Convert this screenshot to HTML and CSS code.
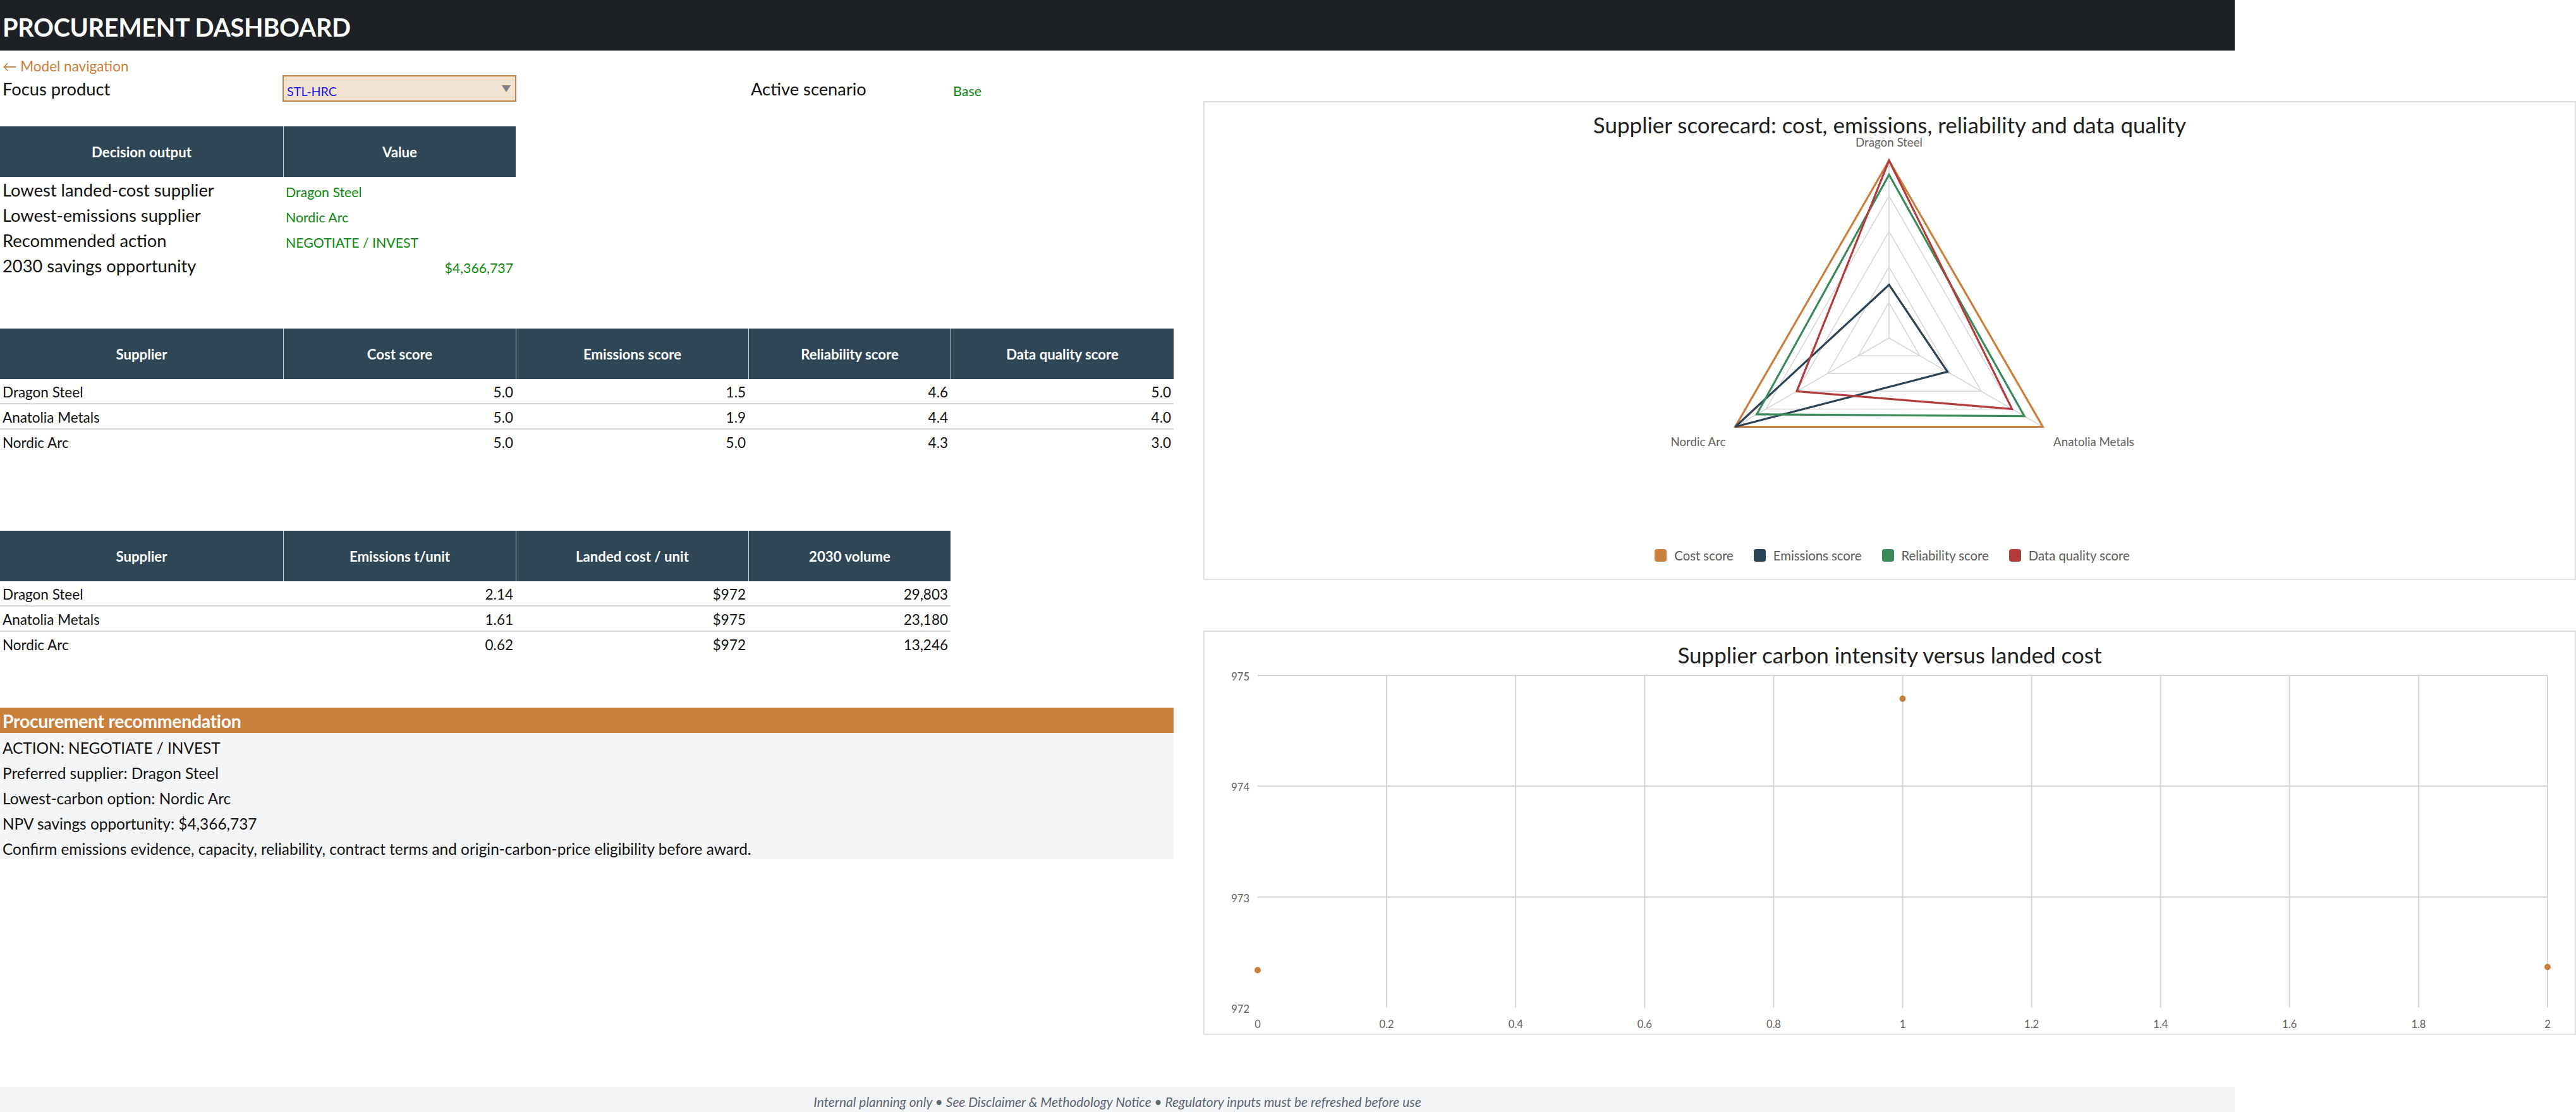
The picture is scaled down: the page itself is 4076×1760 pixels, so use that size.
FILE: index.html
```html
<!DOCTYPE html>
<html lang="en">
<head>
<meta charset="utf-8">
<title>Procurement Dashboard</title>
<link rel="stylesheet" href="styles.css">
</head>
<body>
<header class="topbar"><h1 class="page-title">PROCUREMENT DASHBOARD</h1></header>
<div class="main">
  <section class="left">
    <div class="nav">← Model navigation</div>
    <div class="focus-row">
      <div class="lbl">Focus product</div>
      <div class="dropdown"><span class="dd-text">STL-HRC</span><span class="dd-arrow"></span></div>
      <div class="spacer"></div>
      <div class="lbl">Active scenario</div>
      <div class="scenario-val">Base</div>
    </div>

    <div class="tbl decision">
      <div class="th">Decision output</div><div class="th sep">Value</div>
      <div class="dl">Lowest landed-cost supplier</div><div class="dv">Dragon Steel</div>
      <div class="dl">Lowest-emissions supplier</div><div class="dv">Nordic Arc</div>
      <div class="dl">Recommended action</div><div class="dv">NEGOTIATE / INVEST</div>
      <div class="dl">2030 savings opportunity</div><div class="dv num">$4,366,737</div>
    </div>

    <div class="tbl scores">
      <div class="th">Supplier</div><div class="th sep">Cost score</div><div class="th sep">Emissions score</div><div class="th sep">Reliability score</div><div class="th sep">Data quality score</div>
      <div class="td">Dragon Steel</div><div class="td num">5.0</div><div class="td num">1.5</div><div class="td num">4.6</div><div class="td num">5.0</div>
      <div class="td">Anatolia Metals</div><div class="td num">5.0</div><div class="td num">1.9</div><div class="td num">4.4</div><div class="td num">4.0</div>
      <div class="td last">Nordic Arc</div><div class="td num last">5.0</div><div class="td num last">5.0</div><div class="td num last">4.3</div><div class="td num last">3.0</div>
    </div>

    <div class="tbl emissions">
      <div class="th">Supplier</div><div class="th sep">Emissions t/unit</div><div class="th sep">Landed cost / unit</div><div class="th sep">2030 volume</div>
      <div class="td">Dragon Steel</div><div class="td num">2.14</div><div class="td num">$972</div><div class="td num">29,803</div>
      <div class="td">Anatolia Metals</div><div class="td num">1.61</div><div class="td num">$975</div><div class="td num">23,180</div>
      <div class="td last">Nordic Arc</div><div class="td num last">0.62</div><div class="td num last">$972</div><div class="td num last">13,246</div>
    </div>

    <div class="reco">
      <div class="reco-head">Procurement recommendation</div>
      <div class="reco-body">
        <div class="reco-line">ACTION: NEGOTIATE / INVEST</div>
        <div class="reco-line">Preferred supplier: Dragon Steel</div>
        <div class="reco-line">Lowest-carbon option: Nordic Arc</div>
        <div class="reco-line">NPV savings opportunity: $4,366,737</div>
        <div class="reco-line">Confirm emissions evidence, capacity, reliability, contract terms and origin-carbon-price eligibility before award.</div>
      </div>
    </div>
  </section>

  <section class="charts">
    <div class="card card-radar">
      <div class="chart-title">Supplier scorecard: cost, emissions, reliability and data quality</div>
      <svg class="radar" width="2168" height="645" viewBox="0 0 2168 645">
        <g class="grid">
          <polygon points="1083,261.8 1131.67,346.1 1034.33,346.1"/>
          <polygon points="1083,205.6 1180.34,374.2 985.66,374.2"/>
          <polygon points="1083,149.4 1229.01,402.3 936.99,402.3"/>
          <polygon points="1083,93.2 1277.68,430.4 888.32,430.4"/>
          <polygon points="1083,37 1326.35,458.5 839.65,458.5"/>
          <line x1="1083" y1="318" x2="1083" y2="37"/>
          <line x1="1083" y1="318" x2="1326.35" y2="458.5"/>
          <line x1="1083" y1="318" x2="839.65" y2="458.5"/>
        </g>
        <polygon class="s-cost" points="1083,37 1326.35,458.5 839.65,458.5"/>
        <polygon class="s-emis" points="1083,233.7 1175.47,371.39 839.65,458.5"/>
        <polygon class="s-rel" points="1083,59.48 1297.15,441.64 873.72,438.83"/>
        <polygon class="s-dq" points="1083,37 1277.68,430.4 936.99,402.3"/>
        <text class="axis-lbl" x="1083" y="15" text-anchor="middle">Dragon Steel</text>
        <text class="axis-lbl" x="781" y="489" text-anchor="middle">Nordic Arc</text>
        <text class="axis-lbl" x="1407" y="489" text-anchor="middle">Anatolia Metals</text>
      </svg>
      <div class="legend">
        <span class="lg-item"><span class="sw sw-cost"></span><span class="lg-t">Cost score</span></span>
        <span class="lg-item"><span class="sw sw-emis"></span><span class="lg-t">Emissions score</span></span>
        <span class="lg-item"><span class="sw sw-rel"></span><span class="lg-t">Reliability score</span></span>
        <span class="lg-item"><span class="sw sw-dq"></span><span class="lg-t">Data quality score</span></span>
      </div>
    </div>

    <div class="card card-scatter">
      <div class="chart-title">Supplier carbon intensity versus landed cost</div>
      <svg class="scatter" width="2168" height="580" viewBox="0 0 2168 580">
        <g class="sgrid">
          <line x1="84" y1="13" x2="2125" y2="13"/>
          <line x1="84" y1="188.33" x2="2125" y2="188.33"/>
          <line x1="84" y1="363.67" x2="2125" y2="363.67"/>
          <line x1="288.1" y1="13" x2="288.1" y2="539"/>
          <line x1="492.2" y1="13" x2="492.2" y2="539"/>
          <line x1="696.3" y1="13" x2="696.3" y2="539"/>
          <line x1="900.4" y1="13" x2="900.4" y2="539"/>
          <line x1="1104.5" y1="13" x2="1104.5" y2="539"/>
          <line x1="1308.6" y1="13" x2="1308.6" y2="539"/>
          <line x1="1512.7" y1="13" x2="1512.7" y2="539"/>
          <line x1="1716.8" y1="13" x2="1716.8" y2="539"/>
          <line x1="1920.9" y1="13" x2="1920.9" y2="539"/>
          <line x1="2125" y1="13" x2="2125" y2="539"/>
        </g>
        <g class="ylbl">
          <text x="71" y="21" text-anchor="end">975</text>
          <text x="71" y="196" text-anchor="end">974</text>
          <text x="71" y="372" text-anchor="end">973</text>
          <text x="71" y="547" text-anchor="end">972</text>
        </g>
        <g class="xlbl">
          <text x="84" y="571" text-anchor="middle">0</text>
          <text x="288.1" y="571" text-anchor="middle">0.2</text>
          <text x="492.2" y="571" text-anchor="middle">0.4</text>
          <text x="696.3" y="571" text-anchor="middle">0.6</text>
          <text x="900.4" y="571" text-anchor="middle">0.8</text>
          <text x="1104.5" y="571" text-anchor="middle">1</text>
          <text x="1308.6" y="571" text-anchor="middle">1.2</text>
          <text x="1512.7" y="571" text-anchor="middle">1.4</text>
          <text x="1716.8" y="571" text-anchor="middle">1.6</text>
          <text x="1920.9" y="571" text-anchor="middle">1.8</text>
          <text x="2125" y="571" text-anchor="middle">2</text>
        </g>
        <g class="pts">
          <circle cx="84" cy="479.4" r="5"/>
          <circle cx="1104.5" cy="49.8" r="5"/>
          <circle cx="2125" cy="474.5" r="5"/>
        </g>
      </svg>
    </div>
  </section>
</div>
<footer class="footer"><span class="footer-text">Internal planning only • See Disclaimer &amp; Methodology Notice • Regulatory inputs must be refreshed before use</span></footer>
</body>
</html>
```
FILE: styles.css
```css
html, body {
  margin: 0;
  padding: 0;
}
body {
  width: 4076px;
  min-height: 1760px;
  display: flex;
  flex-direction: column;
  font-family: Lato, "Open Sans", sans-serif;
  color: #111;
  background: #fff;
}
.topbar {
  width: 3536px;
  height: 80px;
  box-sizing: border-box;
  background: #1d2025;
  padding: 23px 0 0 4px;
}
.page-title {
  margin: 0;
  font-size: 39.6px;
  line-height: 40px;
  font-weight: 700;
  color: #fff;
  letter-spacing: -0.3px;
}
.main {
  display: flex;
  align-items: flex-start;
}
.left {
  width: 1857px;
  flex: 0 0 1857px;
}
.nav {
  margin-top: 12px;
  height: 26px;
  line-height: 26px;
  font-size: 22.5px;
  color: #c8803c;
  padding-left: 4px;
}
.focus-row {
  margin-top: 1px;
  height: 42px;
  display: grid;
  grid-template-columns: 447px 370px 367px 320px 1fr;
  align-items: end;
}
.lbl {
  font-size: 27.3px;
  padding: 0 0 4px 4px;
  line-height: 32px;
}
.dropdown {
  height: 42px;
  box-sizing: border-box;
  border: 2px solid #c8803c;
  background: #f3e3d3;
  display: flex;
  align-items: flex-end;
  justify-content: space-between;
  padding: 0 7px 2px 5px;
}
.dd-text {
  font-size: 19.8px;
  line-height: 25px;
  color: #1515f5;
}
.dd-arrow {
  align-self: center;
  width: 0;
  height: 0;
  border-left: 7.5px solid transparent;
  border-right: 7.5px solid transparent;
  border-top: 11px solid #7d8088;
  margin-top: 3px;
}
.scenario-val {
  font-size: 21.5px;
  line-height: 26px;
  color: #0a8a0a;
  padding: 0 0 4px 4px;
}

.tbl {
  display: grid;
}
.decision {
  margin-top: 39px;
  width: 816px;
  grid-template-columns: 448px 368px;
}
.scores {
  margin-top: 80px;
  width: 1857px;
  grid-template-columns: 448px 368px 368px 320px 353px;
}
.emissions {
  margin-top: 120px;
  width: 1504px;
  grid-template-columns: 448px 368px 368px 320px;
}
.th {
  background: #2f4656;
  color: #fff;
  font-weight: 700;
  font-size: 22.2px;
  display: flex;
  align-items: center;
  justify-content: center;
  height: 80px;
  box-sizing: border-box;
}
.th.sep {
  border-left: 1.5px solid #c5cdd3;
}
.dl {
  height: 40px;
  box-sizing: border-box;
  display: flex;
  align-items: flex-end;
  font-size: 27.3px;
  line-height: 32px;
  padding: 0 0 3px 4px;
}
.dv {
  height: 40px;
  box-sizing: border-box;
  display: flex;
  align-items: flex-end;
  font-size: 21.3px;
  line-height: 26px;
  color: #0a8a0a;
  padding: 0 4px 3.5px 4px;
}
.dv.num {
  justify-content: flex-end;
}
.td {
  height: 40px;
  box-sizing: border-box;
  border-bottom: 2px solid #d3d7dc;
  display: flex;
  align-items: flex-end;
  font-size: 22.5px;
  line-height: 26px;
  padding: 0 4px 4px 4px;
  color: #111;
}
.td.num {
  justify-content: flex-end;
}
.td.last {
  border-bottom-color: transparent;
}

.reco {
  margin-top: 80px;
  width: 1857px;
}
.reco-head {
  height: 40px;
  box-sizing: border-box;
  background: #c8803c;
  color: #fff;
  font-weight: 700;
  font-size: 28.4px;
  line-height: 33px;
  display: flex;
  align-items: flex-end;
  padding: 0 0 2.5px 4px;
  letter-spacing: -0.3px;
}
.reco-body {
  background: #f4f5f7;
}
.reco-line {
  height: 40px;
  box-sizing: border-box;
  display: flex;
  align-items: flex-end;
  font-size: 24.4px;
  line-height: 28px;
  padding: 0 0 2.3px 4px;
}

.charts {
  margin-left: 47px;
  width: 2172px;
  padding-top: 80px;
  display: flex;
  flex-direction: column;
  gap: 80px;
}
.card {
  box-sizing: border-box;
  border: 2px solid #e0e0e0;
  background: #fff;
  display: flex;
  flex-direction: column;
}
.card-radar {
  height: 758px;
}
.card-scatter {
  height: 640px;
}
.chart-title {
  text-align: center;
  font-size: 35px;
  line-height: 40px;
  color: #1f1f1f;
  padding-top: 15px;
  height: 55px;
  box-sizing: border-box;
}
.card-scatter .chart-title {
  padding-top: 16px;
  height: 56px;
}
svg {
  display: block;
  overflow: visible;
}
.grid polygon, .grid line {
  fill: none;
  stroke: #d6d6d6;
  stroke-width: 1.5;
}
.s-cost, .s-emis, .s-rel, .s-dq {
  fill: none;
  stroke-width: 3.2;
  stroke-linejoin: miter;
}
.s-cost { stroke: #c8803c; }
.s-emis { stroke: #2b4354; }
.s-rel { stroke: #3a8a5a; }
.s-dq { stroke: #b43b3b; }
.axis-lbl {
  font-family: Lato, sans-serif;
  font-size: 18.7px;
  fill: #606060;
}
.legend {
  height: 34px;
  display: flex;
  justify-content: center;
  align-items: center;
  gap: 32px;
  font-size: 20.3px;
  color: #5a5a5a;
  padding-left: 8px;
}
.lg-item {
  display: flex;
  align-items: center;
  gap: 12px;
}
.sw {
  width: 19px;
  height: 20px;
  border-radius: 4px;
  display: inline-block;
}
.sw-cost { background: #c8803c; }
.sw-emis { background: #2b4354; }
.sw-rel { background: #3a8a5a; }
.sw-dq { background: #b43b3b; }

.sgrid line {
  stroke: #d4d4d4;
  stroke-width: 2;
}
.ylbl text, .xlbl text {
  font-family: Lato, sans-serif;
  font-size: 16.5px;
  fill: #606060;
}
.pts circle {
  fill: #c8803c;
}

.footer {
  margin-top: auto;
  width: 3536px;
  height: 40px;
  box-sizing: border-box;
  background: #f3f4f6;
  display: flex;
  justify-content: center;
  align-items: flex-end;
  padding-bottom: 4px;
}
.footer-text {
  font-style: italic;
  font-size: 20.9px;
  line-height: 25px;
  color: #5b6473;
}
```
